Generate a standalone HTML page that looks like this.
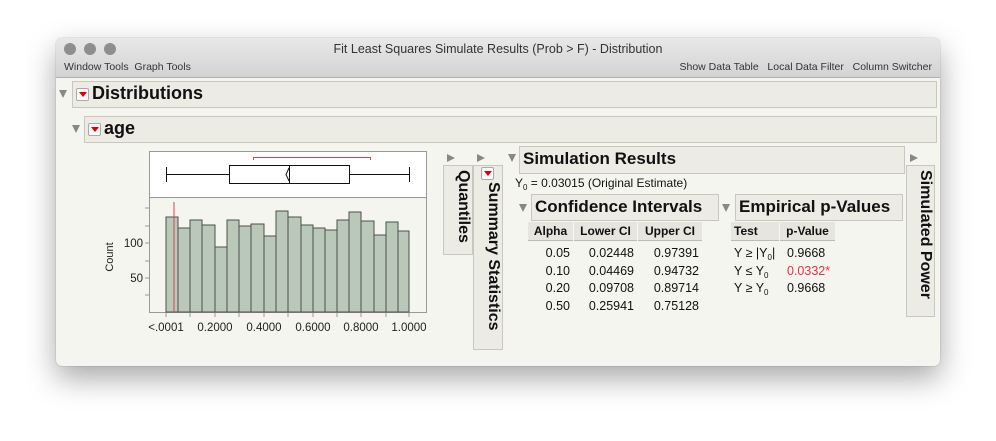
<!DOCTYPE html>
<html><head><meta charset="utf-8"><style>
*{margin:0;padding:0;box-sizing:border-box}
body{width:996px;height:441px;background:#fff;position:relative;overflow:hidden;font-family:"Liberation Sans",sans-serif;color:#111}
.a{position:absolute}
.win{left:56px;top:38px;width:884px;height:328px;background:#f5f5ef;border-radius:6px;box-shadow:0 12px 30px rgba(0,0,0,.35),0 0 1px rgba(0,0,0,.4);overflow:hidden}
.tb{left:0;top:0;width:884px;height:40px;background:linear-gradient(#e8e8e8,#d3d3d3);border-bottom:1px solid #b0b0b0}
.dot{width:12px;height:12px;border-radius:50%;background:#8e8e8e;top:5px}
.hdr{background:#ecebe4;border:1px solid #c8c8c0}
.tri{width:0;height:0;border-left:4.5px solid transparent;border-right:4.5px solid transparent;border-top:8px solid #888}
.trr{width:0;height:0;border-top:4.5px solid transparent;border-bottom:4.5px solid transparent;border-left:8px solid #888}
.rb{width:13px;height:13px;border:1px solid #aaa;background:#fafafa;border-radius:2px}
.rb:after{content:"";position:absolute;left:2px;top:3px;border-left:4px solid transparent;border-right:4px solid transparent;border-top:5px solid #d00}
.big{font-weight:bold;font-size:18px}
.vt{background:#ecebe4;border:1px solid #c8c8c0;writing-mode:vertical-rl;font-weight:bold;font-size:16px;padding-top:4px;text-align:left}
.th{background:#e6e5de;font-weight:bold;font-size:12px;height:19px;line-height:19px;border-bottom:1px solid #bbb;text-align:center}
.td{font-size:12.5px;text-align:right}
sub{font-size:8px;line-height:0;vertical-align:baseline;position:relative;top:3px}
</style></head><body>
<div class="a win">
 <div class="a tb">
  <div class="a dot" style="left:8px"></div><div class="a dot" style="left:28px"></div><div class="a dot" style="left:48px"></div>
  <div class="a" style="left:0;width:884px;top:4px;text-align:center;font-size:12.5px;color:#333">Fit Least Squares Simulate Results (Prob &gt; F) - Distribution</div>
  <div class="a" style="left:8px;top:23px;font-size:10.5px;color:#333">Window Tools&nbsp;&nbsp;Graph Tools</div>
  <div class="a" style="right:8px;top:23px;font-size:10.5px;color:#333">Show Data Table&nbsp;&nbsp;&nbsp;Local Data Filter&nbsp;&nbsp;&nbsp;Column Switcher</div>
 </div>
</div>
<div class="a tri" style="left:59px;top:90px"></div>
<div class="a hdr" style="left:72px;top:81px;width:865px;height:27px"></div>
<div class="a rb" style="left:76px;top:88px"></div>
<div class="a big" style="left:92px;top:83px">Distributions</div>
<div class="a tri" style="left:72px;top:125px"></div>
<div class="a hdr" style="left:84px;top:116px;width:853px;height:27px"></div>
<div class="a rb" style="left:88px;top:123px"></div>
<div class="a big" style="left:104px;top:118px">age</div>

<svg class="a" style="left:0;top:0" width="996" height="441">
 <rect x="149.5" y="151.5" width="277" height="46" fill="#fff" stroke="#999"/>
 <line x1="149.5" y1="197" x2="149.5" y2="313" stroke="#999"/>
 <line x1="426.5" y1="197" x2="426.5" y2="313" stroke="#999"/>
 <line x1="149" y1="312.5" x2="427" y2="312.5" stroke="#999"/>
 <g stroke="#999"><line x1="145" y1="208" x2="149" y2="208"/><line x1="145" y1="226" x2="149" y2="226"/><line x1="145" y1="243" x2="149" y2="243"/><line x1="145" y1="261" x2="149" y2="261"/><line x1="145" y1="278" x2="149" y2="278"/><line x1="145" y1="295" x2="149" y2="295"/></g>
 <g fill="#b9c8b9" stroke="#4a504a" stroke-width="1">
  <rect x="166" y="217" width="12" height="95"/><rect x="178" y="228" width="12" height="84"/><rect x="190" y="220" width="12" height="92"/><rect x="202" y="225" width="13" height="87"/><rect x="215" y="247" width="12" height="65"/><rect x="227" y="220" width="12" height="92"/><rect x="239" y="226" width="12" height="86"/><rect x="251" y="224" width="13" height="88"/><rect x="264" y="236" width="12" height="76"/><rect x="276" y="211" width="12" height="101"/><rect x="288" y="217" width="13" height="95"/><rect x="301" y="225" width="12" height="87"/><rect x="313" y="228" width="12" height="84"/><rect x="325" y="230" width="12" height="82"/><rect x="337" y="220" width="12" height="92"/><rect x="349" y="212" width="12" height="100"/><rect x="361" y="221" width="13" height="91"/><rect x="374" y="235" width="12" height="77"/><rect x="386" y="222" width="12" height="90"/><rect x="398" y="231" width="11" height="81"/>
 </g>
 <line x1="174" y1="202" x2="174" y2="312" stroke="#e04050" stroke-width="1"/>
 <g stroke="#111" fill="none">
  <line x1="166.5" y1="174.5" x2="229" y2="174.5"/><line x1="349" y1="174.5" x2="409" y2="174.5"/>
  <line x1="166.5" y1="167" x2="166.5" y2="182"/><line x1="409.5" y1="167" x2="409.5" y2="182"/>
  <rect x="229.5" y="165.5" width="120" height="18"/><line x1="289.5" y1="165" x2="289.5" y2="183"/>
  <path d="M289 168 L286 174.5 L289 181"/>
 </g>
 <path d="M253.5 160 V157.5 H370.5 V160" stroke="#e04050" fill="none"/>
 <g stroke="#999"><line x1="166" y1="313" x2="166" y2="317"/><line x1="190" y1="313" x2="190" y2="317"/><line x1="215" y1="313" x2="215" y2="317"/><line x1="239" y1="313" x2="239" y2="317"/><line x1="264" y1="313" x2="264" y2="317"/><line x1="288" y1="313" x2="288" y2="317"/><line x1="313" y1="313" x2="313" y2="317"/><line x1="337" y1="313" x2="337" y2="317"/><line x1="361" y1="313" x2="361" y2="317"/><line x1="386" y1="313" x2="386" y2="317"/><line x1="409" y1="313" x2="409" y2="317"/></g>
 <g font-family="Liberation Sans, sans-serif" font-size="11.5" fill="#222" text-anchor="middle">
  <text x="166" y="331">&lt;.0001</text><text x="215" y="331">0.2000</text><text x="264" y="331">0.4000</text><text x="313" y="331">0.6000</text><text x="361" y="331">0.8000</text><text x="409" y="331">1.0000</text>
  <text x="143" y="247" text-anchor="end">100</text><text x="143" y="282" text-anchor="end">50</text>
  <text transform="translate(113,257) rotate(-90)" font-size="11">Count</text>
 </g>
</svg>

<div class="a trr" style="left:447px;top:154px"></div>
<div class="a trr" style="left:477px;top:154px"></div>
<div class="a vt" style="left:443px;top:165px;width:30px;height:90px;padding-left:2px">Quantiles</div>
<div class="a vt" style="left:473px;top:165px;width:30px;height:185px;padding-top:16px;padding-left:2px">Summary Statistics</div>
<div class="a rb" style="left:481px;top:167px"></div>
<div class="a tri" style="left:508px;top:154px"></div>
<div class="a hdr" style="left:519px;top:146px;width:386px;height:28px"></div>
<div class="a big" style="left:523px;top:149px;font-size:17px">Simulation Results</div>
<div class="a trr" style="left:910px;top:154px"></div>
<div class="a vt" style="left:906px;top:165px;width:29px;height:152px;padding-left:2px">Simulated Power</div>
<div class="a" style="left:515px;top:176px;font-size:12px">Y<sub>0</sub> = 0.03015 (Original Estimate)</div>
<div class="a tri" style="left:519px;top:204px"></div>
<div class="a hdr" style="left:531px;top:194px;width:188px;height:27px"></div>
<div class="a big" style="left:535px;top:197px;font-size:17px">Confidence Intervals</div>
<div class="a tri" style="left:722px;top:204px"></div>
<div class="a hdr" style="left:735px;top:194px;width:168px;height:27px"></div>
<div class="a big" style="left:739px;top:197px;font-size:17px">Empirical p-Values</div>

<div class="a th" style="left:528px;top:222px;width:45px">Alpha</div>
<div class="a th" style="left:574px;top:222px;width:63px">Lower CI</div>
<div class="a th" style="left:638px;top:222px;width:64px">Upper CI</div>
<div class="a th" style="left:731px;top:222px;width:48px;text-align:left;padding-left:3px">Test</div>
<div class="a th" style="left:780px;top:222px;width:55px">p-Value</div>

<div class="a td" style="left:528px;top:245px;width:42px;line-height:17.7px">0.05<br>0.10<br>0.20<br>0.50</div>
<div class="a td" style="left:574px;top:245px;width:60px;line-height:17.7px">0.02448<br>0.04469<br>0.09708<br>0.25941</div>
<div class="a td" style="left:638px;top:245px;width:61px;line-height:17.7px">0.97391<br>0.94732<br>0.89714<br>0.75128</div>
<div class="a" style="left:734px;top:245px;font-size:12.5px;line-height:17.7px">Y ≥ |Y<sub>0</sub>|<br>Y ≤ Y<sub>0</sub><br>Y ≥ Y<sub>0</sub></div>
<div class="a" style="left:787px;top:245px;font-size:12.5px;line-height:17.7px">0.9668<br><span style="color:#e8304a">0.0332*</span><br>0.9668</div>
</body></html>
